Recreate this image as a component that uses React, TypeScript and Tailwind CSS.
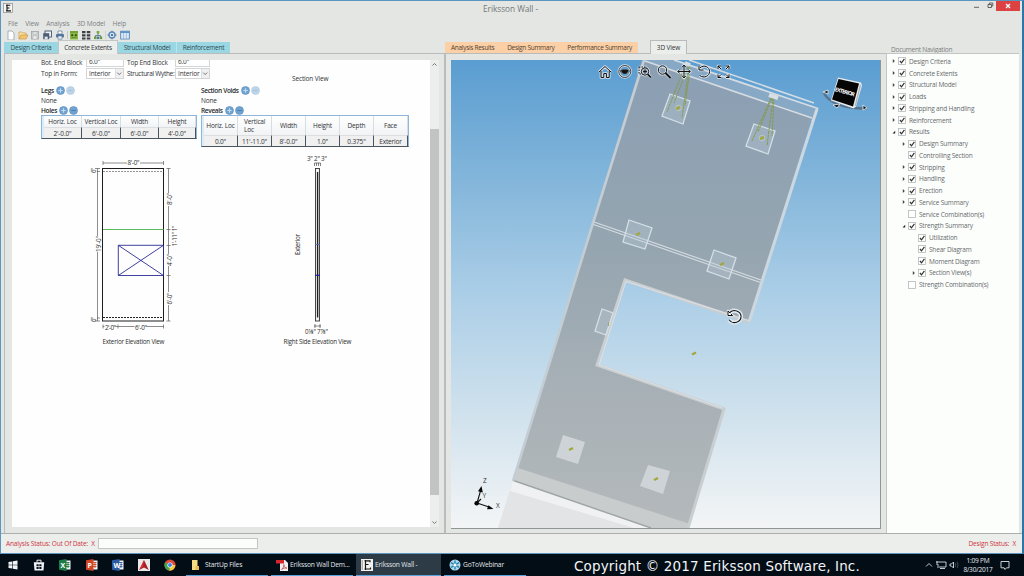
import React from "react";

/* ---------- small shared pieces ---------- */

const tools = [
  <path key="a" d="M2 1h4l2 2v7H2z" fill="#fff" stroke="#8795a8" strokeWidth=".7" />,
  <g key="b"><path d="M1 9V2h3l1 1h3v2" fill="#fbe3a4" stroke="#c99a4d" strokeWidth=".7" /><path d="M1 9l2-4h7L8 9z" fill="#f6c66b" stroke="#c08c3c" strokeWidth=".6" /></g>,
  <g key="c"><rect x="1.5" y="1.5" width="7" height="7.5" fill="#cfd1d3" stroke="#a3a6a9" strokeWidth=".8" /><path d="M3 2h4v2H3zM3 6h4v3H3z" fill="#eee" stroke="#a3a6a9" strokeWidth=".4" /></g>,
  <g key="d"><rect x="3" y="1" width="6.500" height="6" fill="#eef2f6" stroke="#44566c" strokeWidth=".9" /><rect x="1.200" y="3.200" width="6" height="6" fill="#4c5d74" /><path d="M2.700 6.600h3v2.600h-3z" fill="#dfe6ee" /></g>,
  <g key="e"><path d="M3 1h4v3H3z" fill="#fff" stroke="#55708f" strokeWidth=".7" /><rect x="1" y="4" width="8" height="3.400" rx="1" fill="#56779d" /><path d="M3 6h4v3.200H3z" fill="#e9f1fa" stroke="#55708f" strokeWidth=".6" /></g>,
];

const tools2 = [
  <g key="f"><rect x="1" y="1" width="8" height="8.500" fill="#8cba45" /><path d="M1 2h8" stroke="#5f8a2c" strokeWidth="1" /><path d="M2.500 4.500h1.500v1.500H2.500zM6 4.500h1.500v1.500H6zM2.500 7.700h5" fill="#2d4d12" stroke="#34551a" strokeWidth=".5" /></g>,
  <path key="g" d="M1 1h3.500v2.200H1zM5.800 1h3.500v2.200H5.800zM1 4.200h3.500v2.200H1zM5.800 4.200h3.500v2.200H5.800zM1 7.400h3.500v2.200H1zM5.800 7.400h3.500v2.200H5.800z" fill="#3b3f45" />,
  <g key="h"><path d="M5 3v2.500M2.500 8V5.500h5V8" fill="none" stroke="#4d6c85" strokeWidth=".8" /><rect x="3.700" y="1" width="2.600" height="2.700" fill="#79a83c" /><rect x="1" y="6.500" width="2.600" height="2.600" fill="#6a9c3a" /><rect x="3.900" y="6.500" width="2.300" height="2.600" fill="#4c7cae" /><rect x="6.600" y="6.500" width="2.600" height="2.600" fill="#6a9c3a" /></g>,
];

const tools3 = [
  <g key="i"><circle cx="5" cy="5" r="3" fill="#d7e6f4" stroke="#5f8ab4" strokeWidth="1.400" /><path d="M5 .8v1.500M5 7.700v1.500M.6 5h1.600M7.800 5h1.600" stroke="#5f8ab4" strokeWidth="1.400" /><circle cx="5" cy="5" r="1.100" fill="#375f8b" /></g>,
  <g key="j"><rect x=".7" y="1.200" width="8.600" height="7.800" fill="#fff" stroke="#3f77b0" strokeWidth=".8" /><path d="M.7 1.200h8.600v2H.7z" fill="#5a93c9" /><path d="M.7 5h8.600M.7 7h8.600M3.500 3v6M6.400 3v6" stroke="#6d9cc9" strokeWidth=".5" /></g>,
];

function ToolGroup({ items }: { items: React.ReactNode[] }) {
  return (
    <div className="flex gap-[2.300px]">
      {items.map((it, i) => (
        <svg key={i} viewBox="0 0 10 10" className="size-[10px]">{it}</svg>
      ))}
    </div>
  );
}

function RoundBtn({ minus, dim }: { minus?: boolean; dim?: boolean }) {
  return (
    <svg viewBox="0 0 9 9" className={dim ? "size-[9px] opacity-45" : "size-[9px]"}>
      <circle cx="4.500" cy="4.500" r="4" fill="#6fa3d2" stroke="#5f8db8" strokeWidth=".6" />
      <path d={minus ? "M2.300 4.500h4.400" : "M2.300 4.500h4.400M4.500 2.300v4.400"} stroke={minus ? "#4d7dab" : "#c2dbef"} strokeWidth="1.100" />
    </svg>
  );
}

function Heading({ label, dim }: { label: string; dim?: boolean }) {
  return (
    <div className="flex h-[10px] items-center gap-[1px]">
      <span className="pr-[1px] font-semibold tracking-[-0.320px] text-[#26292c]">{label}</span>
      <RoundBtn />
      <RoundBtn minus dim={dim} />
    </div>
  );
}

function Select({ value, className }: { value: string; className: string }) {
  return (
    <div className={`flex h-[11px] items-center justify-between border border-[#d3d5d7] bg-white pl-[2px] ${className}`}>
      <span>{value}</span>
      <svg viewBox="0 0 8 9" className="h-[9px] w-[8px] bg-[#efefef]">
        <path d="M.3 0v9" stroke="#c8cacc" strokeWidth=".6" />
        <path d="M2.200 3.600l2 2 2-2" fill="none" stroke="#555" strokeWidth=".8" />
      </svg>
    </div>
  );
}

function DataTable({ cols, head, row, headHeight }: { cols: string; head: string[]; row: string[]; headHeight: string }) {
  return (
    <div className="flex border border-[#8db6da] border-b-[#4a545e] bg-white">
      <div className="w-[2px] bg-[#d9ecf8]" />
      <div className="flex-1">
        <div className={`grid ${cols} ${headHeight}`}>
          {head.map((h) => (
            <div key={h} className="flex items-center justify-center border-r border-[#d6dde3] bg-gradient-to-b from-white to-[#f1f3f5] leading-[8px]">
              <span className={h === "Vertical Loc" && row.length > 4 ? "w-[21px]" : "whitespace-nowrap"}>{h}</span>
            </div>
          ))}
        </div>
        <div className={`grid h-[11px] ${cols}`}>
          {row.map((v, i) => (
            <div key={i} className="flex items-center justify-center border-r border-r-[#4a545e] border-t border-t-[#dcdfe1] bg-[#f0f0f0]">{v}</div>
          ))}
        </div>
      </div>
    </div>
  );
}

/* ---------- elevation drawings ---------- */

function Elevations() {
  return (
    <svg viewBox="12 149 418 200" className="block h-[200px] w-[418px] tracking-normal" fontSize="6.300" fill="#303030">
      <g stroke="#5b5b5b" strokeWidth=".7" fill="none">
        <path d="M103 163h60.500M103 161v4M163.500 161v4M97.500 168.500v152.500M95 168.500h5M95 321h5M100 171.500h-3M100 318h-3" />
        <path d="M168.500 168.500v152.500M166.500 168.500h4M166.500 229.500h4M166.500 245.500h4M166.500 275.500h4M166.500 321h4M103 326.500h60.500M103 324.500v4M118 324.500v4M163.500 324.500v4" />
      </g>
      <rect x="102.500" y="168.500" width="61" height="152.500" fill="none" stroke="#1e1e1e" strokeWidth="1" />
      <path d="M103 171.500h60" stroke="#777" strokeWidth=".8" strokeDasharray="2 1" />
      <path d="M103 317.500h60" stroke="#222" strokeWidth="1" strokeDasharray="2 1" />
      <path d="M103 229.500h60.500" stroke="#5cba5c" strokeWidth="1.200" />
      <path d="M118.300 245.300h45.200v30.200h-45.200zM118.300 245.300l45.200 30.200M163.500 245.300l-45.200 30.200" fill="none" stroke="#2b2b94" strokeWidth=".9" />
      <g fill="#fdfefd">
        <rect x="127" y="160" width="13" height="6" /><rect x="95" y="236" width="5" height="16" /><rect x="166" y="193" width="5" height="13" />
        <rect x="166" y="254" width="5" height="12" /><rect x="166" y="292" width="5" height="13" /><rect x="104.500" y="324" width="11" height="6" /><rect x="134.500" y="324" width="12" height="6" />
      </g>
      <text x="127.500" y="165.300" textLength="12">8'-0"</text>
      <text x="105" y="329.500" textLength="11">2'-0"</text>
      <text x="135" y="329.500" textLength="12">6'-0"</text>
      <text transform="translate(101 252) rotate(-90)" textLength="16">19'-0"</text>
      <text transform="translate(95.500 173) rotate(-90)" textLength="5">6"</text>
      <text transform="translate(95.500 322) rotate(-90)" textLength="5">6"</text>
      <text transform="translate(171.500 205) rotate(-90)" textLength="12">8'-0"</text>
      <text transform="translate(177.300 246.500) rotate(-90)" textLength="21">1'-11" 1"</text>
      <text transform="translate(171.500 266) rotate(-90)" textLength="12">4'-0"</text>
      <text transform="translate(171.500 304.500) rotate(-90)" textLength="12">6'-0"</text>
      <text x="102.500" y="343.500" textLength="62">Exterior Elevation View</text>

      <text x="307" y="161" textLength="20">3" 2" 3"</text>
      <path d="M314.500 166v-3h6v3M316.500 163v3M318.500 163v3M315 324v4M320 324v4M314 326h7" fill="none" stroke="#333" strokeWidth=".6" />
      <rect x="315.500" y="168.500" width="4" height="152.500" fill="#f3f3f3" stroke="#333" strokeWidth=".9" />
      <path d="M317.600 172v145.500" stroke="#222" strokeWidth="1.400" />
      <path d="M315 244.500h5" stroke="#555fb0" strokeWidth=".8" />
      <path d="M315 275.300h5" stroke="#1c1cae" strokeWidth="1.200" />
      <text transform="translate(300 255) rotate(-90)" textLength="21">Exterior</text>
      <text x="305" y="334" textLength="23">0⅛" 7⅞"</text>
      <text x="283.500" y="343.500" textLength="68">Right Side Elevation View</text>
    </svg>
  );
}

/* ---------- 3D viewport ---------- */

const plates = [
  "670,94 690,101 683,124 662,116",
  "754,124 775,131 768,154 746,146",
  "629,220 652,228 645,249 623,242",
  "714,250 736,258 729,279 707,271",
  "602,309 613,313 606,335 595,331",
];
const dots = [[678, 108], [762, 138], [638, 234], [722, 264], [694, 353.500], [571, 449], [656, 479]];

function Viewport() {
  return (
    <svg viewBox="451 60 429 468" className="block h-full w-full tracking-normal">
      <defs>
        <linearGradient id="sky" x1="0" y1="0" x2="0" y2="1">
          <stop offset="0" stopColor="#5a9dd1" />
          <stop offset=".25" stopColor="#82b5da" />
          <stop offset=".5" stopColor="#abcee7" />
          <stop offset=".75" stopColor="#cfe1ed" />
          <stop offset="1" stopColor="#f3f5f6" />
        </linearGradient>
        <linearGradient id="slab" x1="0" y1="0" x2="0" y2="1">
          <stop offset="0" stopColor="#8b9fb4" />
          <stop offset=".4" stopColor="#95a5b0" />
          <stop offset=".7" stopColor="#a7b0b6" />
          <stop offset="1" stopColor="#b4b9bb" />
        </linearGradient>
      </defs>
      <rect x="451" y="60" width="429" height="468" fill="url(#sky)" />
      <path d="M642 60H674L818 108 812 119z" fill="#87a9c6" />
      <path d="M642 60L812 117 749 322 625 280 597 365 724 409 689 528H651L513 481z" fill="url(#slab)" />
      <path d="M513 480L651 528H498z" fill="#e2e4e5" />
      <path d="M513 480L651 528H634L510 491z" fill="#eff1f2" />
      <path d="M518 468L690 524 689 528H651L513 480z" fill="#c8cccd" />
      <path d="M513.500 480.500L651 528" stroke="#9fa4a6" strokeWidth="1.400" />
      <g fill="none" stroke="#d5dce2">
        <path d="M644 60L593 223 513 481" stroke="#c4cdd4" strokeWidth="2.600" />
        <path d="M817 109L749 322" stroke="#ccd7df" strokeWidth="3" />
        <path d="M674 60L818 108.500" strokeWidth="1.800" />
        <path d="M645 61L812 118M689 60L814 103" strokeWidth="1.500" />
        <path d="M818 108L812 121" strokeWidth="1.200" />
        <path d="M594 222L761 280M593.500 224.500L760.500 282.500" strokeWidth="1.100" />
        <path d="M749 322L625 280 597 365 724 409 688 528" stroke="#c9ced1" strokeWidth="3" />
        <path d="M749 320.500L626 281.500 599 365 722 408" stroke="#e2e5e7" strokeWidth=".8" />
      </g>
      {plates.map((p) => (
        <polygon key={p} points={p} fill="#b9cbd8" fillOpacity=".35" stroke="#d4dfe6" strokeWidth="1.300" />
      ))}
      <polygon points="563,435 585,442 578,464 556,457" fill="#ced3d7" />
      <polygon points="648,465 670,471 663,494 640,486" fill="#ced3d7" />
      <path d="M685 66l-18 46M689 66l-7 52M688 67l-14 36M690 68l-5 38M771 98l-19 43M773 98l-6 48M772 98l-14 34M774 98l-2 38" stroke="#84993f" strokeWidth=".9" fill="none" strokeDasharray="3 .7" />
      <path d="M685 63l5 2M769 95l9 3" stroke="#d7dfe4" strokeWidth="4" />
      <circle cx="678.500" cy="108" r="2.800" fill="none" stroke="#b9c9b9" />
      <circle cx="762" cy="138" r="2.800" fill="none" stroke="#b9c9b9" />
      {dots.map(([x, y]) => (
        <path key={`${x}-${y}`} d={`M${x - 2} ${y + 1}L${x + 2} ${y - 1}`} stroke="#a2a838" strokeWidth="2.200" />
      ))}
      <path d="M608.500 322v4" stroke="#a2a868" />

      {/* navigation tools, pale halo below a dark stroke */}
      {["#dce6ee", "#111"].map((c, i) => (
        <g key={c} fill="none" stroke={c} strokeWidth={i ? 1 : 2.600} strokeLinejoin="round">
          <path d="M599 72l6-5.500 6 5.500M601 71v6.500h2.800v-4h2.600v4h2.800V71" />
          <circle cx="624.800" cy="71.500" r="6" strokeWidth={i ? 0.800 : 2.400} />
          <path d="M620 70.800c2.500-1.800 7-1.800 9.600 0c-1.200 3.800-8.400 3.800-9.600 0z" strokeWidth={i ? 0.600 : 1} />
          <path d="M639 67h8M639 67v7h3" strokeDasharray={i ? "1.500 1" : undefined} />
          <circle cx="645" cy="71.500" r="3.700" />
          <path d="M643 71.500h4M645 69.500v4" strokeWidth={i ? 0.900 : 0} />
          <path d="M647.800 74.300l3 3" strokeWidth={i ? 1.700 : 3} />
          <circle cx="662.500" cy="70" r="4.200" />
          <path d="M665.500 73l5 5" strokeWidth={i ? 2 : 3.200} />
          <path d="M684 65.500v12M678 71.500h12M682.300 67l1.700-2 1.700 2M682.300 76l1.700 2 1.700-2M679.600 69.800l-2 1.700 2 1.700M688.400 69.800l2 1.700-2 1.700" />
          <path d="M700 67.800c4-3.600 9.600-.8 9.600 3.700s-5.600 7.400-10 3.900M699 65.500v4.500h4.500" />
          <path d="M718 69v-3h3M718 66l3 3M729 69v-3h-3M729 66l-3 3M718 74.500v3h3M718 77.500l3-3M729 74.500v3h-3M729 77.500l-3-3" />
          <path d="M729 313.300c4-5 12-2.300 12 3.200s-8 8.700-12 3.200" strokeWidth={i ? 1.100 : 4.200} />
          <path d="M728 311v4.500h4.500z" fill={i ? "#fff" : "none"} />
        </g>
      ))}
      <path d="M729.800 314c3.600-4.200 10-1.700 10 2.500s-6.400 7-10 2.500" fill="none" stroke="#e8edf1" strokeWidth="1" />
      <path d="M621.800 70.300h6c.3 4-6.300 4-6 0z" fill="#111" stroke="#111" />

      {/* orientation cube */}
      <path d="M824 93c4 9 22 17 43 15" fill="none" stroke="#59758e" strokeWidth="2.600" />
      <path d="M823 92l5-2v4zM867 108l-4-3v5zM833 105l7-1-3 4z" fill="#111" stroke="#dde6ed" strokeWidth=".9" />
      <path d="M838 77.500l23 5 1 3-6 21-2.500 2-22.500-8z" fill="#e8edf1" />
      <path d="M838.500 79l20.500 4.500-6 23-21-7z" fill="#050505" />
      <path d="M860 84l1 1.500-5 20-1.500 1z" fill="#a8b2ba" />
      <text transform="translate(834.500 91) rotate(15)" fontSize="5.400" fontWeight="700" fill="#fff" textLength="20.500">EXTERIOR</text>

      {/* axis triad */}
      <path d="M477 503l3.500-12M477 503l12 4M477 503l4-4" stroke="#111" strokeWidth="1.100" />
      <circle cx="476.700" cy="503.300" r="2.300" fill="#080808" />
      <path d="M481.500 486l1.300 6.500-4.800-1.200zM493.500 509l-6.500.3 1.500-4z" fill="#080808" />
      <g fontSize="6.500" fill="#333"><text x="483" y="482.500">Z</text><text x="482.500" y="498">Y</text><text x="496" y="508">X</text></g>
    </svg>
  );
}

/* ---------- document navigation ---------- */

type Node = [depth: number, arrow: "c" | "o" | "", checked: boolean, label: string];
const nodes: Node[] = [
  [0, "c", true, "Design Criteria"], [0, "c", true, "Concrete Extents"], [0, "c", true, "Structural Model"],
  [0, "c", true, "Loads"], [0, "c", true, "Stripping and Handling"], [0, "c", true, "Reinforcement"],
  [0, "o", true, "Results"], [1, "c", true, "Design Summary"], [1, "", true, "Controlling Section"],
  [1, "c", true, "Stripping"], [1, "c", true, "Handling"], [1, "c", true, "Erection"],
  [1, "c", true, "Service Summary"], [1, "", false, "Service Combination(s)"], [1, "o", true, "Strength Summary"],
  [2, "", true, "Utilization"], [2, "", true, "Shear Diagram"], [2, "", true, "Moment Diagram"],
  [2, "c", true, "Section View(s)"], [1, "", false, "Strength Combination(s)"],
];
const indent = ["pl-[3.500px]", "pl-[13.500px]", "pl-[23.500px]"];

function NavTree() {
  return (
    <div className="flex-1 border-l border-t border-[#c3c6c6] bg-[#fcfefc] pt-[1.500px] tracking-[-0.190px] text-[#686b6d]">
      {nodes.map(([d, arrow, on, label]) => (
        <div key={label} className={`flex h-[11.750px] items-center ${indent[d]}`}>
          <svg viewBox="0 0 7 8" className="h-[8px] w-[7px]">
            {arrow === "c" && <path d="M1.800 2.100l2 1.900-2 1.900z" fill="#444" />}
            {arrow === "o" && <path d="M4.200 2.800v2.700H1.500z" fill="#222" />}
          </svg>
          <svg viewBox="0 0 8 8" className="size-[8px]">
            <rect x=".5" y=".5" width="7" height="7" fill="#fff" stroke="#b5b8ba" strokeWidth=".8" />
            {on && <path d="M1.900 4l1.600 1.800 2.900-4" fill="none" stroke="#333" strokeWidth="1.200" />}
          </svg>
          <span className="ml-[3.500px] whitespace-nowrap">{label}</span>
        </div>
      ))}
    </div>
  );
}

/* ---------- taskbar ---------- */

function Office({ letter, color }: { letter: string; color: string }) {
  return (
    <svg viewBox="0 0 12 12" className="size-[12px]">
      <rect x="5" y="1.500" width="6.500" height="9" fill="#f3f6f6" />
      <path d="M7 3.500h3.500M7 5.500h3.500M7 7.500h3.500M9 3v6" stroke={color} strokeWidth=".9" />
      <path d="M0 1.200L7.500 0v12L0 10.800z" fill={color} />
      <text x="1.500" y="8.600" fontSize="7" fontWeight="700" fill="#fff">{letter}</text>
    </svg>
  );
}

function Task({ icon, label, active }: { icon: React.ReactNode; label: string; active?: boolean }) {
  return (
    <div className={`flex h-[22px] items-center border-b-[1.500px] border-[#5ba3dc] pl-[5px] ${active ? "w-[85px] bg-[#2c3b45]" : "w-[82px]"}`}>
      <svg viewBox="0 0 12 12" className="size-[12px]">{icon}</svg>
      <span className="ml-[2px] whitespace-nowrap text-[6.700px] tracking-[-0.170px] text-[#e3e8eb]">{label}</span>
    </div>
  );
}

function Taskbar() {
  return (
    <div className="flex h-[22px] items-center bg-[#030d16]">
      <div className="flex w-[186px] items-center gap-[14.200px] pl-[7px]">
        <svg viewBox="0 0 12 12" className="size-[12px]"><path d="M1.500 3l3.700-.6v3.300H1.500zM5.800 2.300l4.700-.7v4.100H5.800zM1.500 6.300h3.700v3.300l-3.700-.6zM5.800 6.300h4.700v4.100l-4.700-.7z" fill="#f1f4f6" /></svg>
        <svg viewBox="0 0 12 12" className="size-[12px]"><path d="M4 3.500V1.200h4v2.300" fill="none" stroke="#f1f4f6" /><path d="M.8 3.300h10.400l-.7 8.200h-9z" fill="#f1f4f6" /><path d="M3.500 5.300h2.200v2H3.500zM6.300 5.300h2.200v2H6.300zM3.500 8h2.200v2H3.500zM6.300 8h2.200v2H6.300z" fill="#0a141c" /></svg>
        <Office letter="X" color="#1f7b46" />
        <Office letter="P" color="#d04526" />
        <Office letter="W" color="#2a5ba2" />
        <svg viewBox="0 0 12 12" className="size-[12px]"><rect width="12" height="12" fill="#e9e9ea" /><path d="M6 1l4.800 10L6 8.500 1.200 11z" fill="#a81e26" /><path d="M6 1l-1 6.500L1.200 11z" fill="#d8323a" /></svg>
        <svg viewBox="0 0 12 12" className="size-[12px]"><circle cx="6" cy="6" r="5.600" fill="#e04a3c" /><path d="M6 6L1.200 3.200A5.600 5.600 0 0 0 5.600 11.600z" fill="#3fa455" /><path d="M6 6h5.400A5.600 5.600 0 0 1 5.300 11.600z" fill="#f5cb3c" /><circle cx="6" cy="6" r="2.600" fill="#fff" /><circle cx="6" cy="6" r="2" fill="#4484e0" /></svg>
      </div>
      <div className="flex w-[388px] items-center gap-[3px]">
        <Task label="StartUp Files" icon={<g><path d="M1 1h5.500v10H1z" fill="#f6dc85" /><path d="M4.500 7h3.500v4H4.500z" fill="#e9bf55" /></g>} />
        <Task label="Eriksson Wall Dem..." icon={<g><path d="M4 1h5l3 3v8H4z" fill="#f3eeee" /><path d="M0 1h8v3.500H0z" fill="#d8262c" /><path d="M5.500 10.500c2-2 2.500-3 2.300-5c.5 3 1.500 3.500 3.200 3.600c-2-.3-3.500 0-5.500 1.400" fill="none" stroke="#b53a3a" strokeWidth=".7" /></g>} />
        <Task active label="Eriksson Wall -" icon={<g><rect width="12" height="12" fill="#f1f1ef" /><path d="M1.200 1v10" stroke="#555" strokeWidth=".6" /><path d="M4.500 1v10M3.500 1.800h5.500M9 1.300v2M3.500 10h6M9.500 8.500v2M5 5.500h2.500" stroke="#151515" strokeWidth="1.200" /></g>} />
        <Task label="GoToWebinar" icon={<g><circle cx="6" cy="6" r="5.500" fill="#a9d9ee" /><path d="M6 1.500v9M2 3.700l8 4.600M10 3.700L2 8.300" stroke="#2b80ab" strokeWidth="1.400" /><circle cx="6" cy="6" r="1.600" fill="#fff" /></g>} />
      </div>
      <div className="w-[350px] whitespace-nowrap pt-[1px] font-['DejaVu_Sans'] text-[13.500px] leading-[20px] tracking-[0.150px] text-[#f2f4f5]">Copyright © 2017 Eriksson Software, Inc.</div>
      <svg viewBox="0 0 36 12" className="h-[12px] w-[36px]" fill="none" stroke="#d6dde2" strokeWidth=".9">
        <path d="M2 7.500l3-3 3 3" />
        <path d="M15 3h7v5h-7M13 2v4M12 3h3M16 9.500h5M14 5v4" />
        <path d="M26 5h1.500l2-2v6l-2-2H26z" /><path d="M31 4c1 1.500 1 2.500 0 4M33 3c1.300 2 1.300 4 0 6" opacity=".35" />
      </svg>
      <div className="flex w-[35px] flex-col items-center pl-[1px] text-[6.600px] leading-[9.500px] tracking-[-0.220px] text-[#e6eaed]">
        <span>1:09 PM</span>
        <span>8/30/2017</span>
      </div>
      <svg viewBox="0 0 10 11" className="ml-[5px] h-[11px] w-[10px]"><path d="M1 1.500h8v6.300H6.500L5 9.500 4.200 7.800H1z" fill="none" stroke="#dfe5e9" strokeWidth=".9" /></svg>
    </div>
  );
}

/* ---------- application ---------- */

export default function App() {
  return (
    <div className="flex h-[576px] w-[1024px] flex-col overflow-hidden bg-[#e4e6e4] font-['Open_Sans','Noto_Sans',sans-serif] text-[6.500px] leading-[9px] tracking-[-0.150px] text-[#303336]">
      <div className="flex h-[554px] flex-col border border-[#5b94bf] border-r-2 border-r-[#2f76a8]">
        {/* title */}
        <div className="flex h-[16px] shrink-0 items-start">
          <svg viewBox="0 0 10 10" className="ml-[2px] mt-[2px] size-[10px]"><rect x=".5" y=".5" width="9" height="9" fill="#f4f4f2" stroke="#8a8a8a" strokeWidth=".7" /><path d="M4 1.500v7M3 2.200h4.300M3 7.900h5M4 5h2.500" stroke="#151515" strokeWidth="1.100" /></svg>
          <div className="flex-1 pl-[470px] pt-[3px] text-[8.300px] tracking-[-0.050px] text-[#74787a]">Eriksson Wall -</div>
          <svg viewBox="0 0 22 12" className="h-[12px] w-[22px]"><path d="M0 6.300h5" stroke="#666" strokeWidth="1" /><path d="M14 3.500h3.500v3H14zM15.300 3.500v-1.500h3.500v3h-1.300" fill="none" stroke="#555" strokeWidth=".9" /></svg>
          <div className="mr-[2px] flex h-[10px] w-[24px] items-center justify-center bg-[#dd4242]">
            <svg viewBox="0 0 6 6" className="size-[6px]"><path d="M1 1l4 4M5 1L1 5" stroke="#fff" strokeWidth="1.300" /></svg>
          </div>
        </div>
        {/* menu */}
        <div className="flex h-[12px] shrink-0 items-center gap-[7.500px] pl-[7px] text-[#7d8082]">
          <span>File</span><span>View</span><span>Analysis</span><span>3D Model</span><span>Help</span>
        </div>
        {/* toolbar */}
        <div className="flex h-[11px] shrink-0 items-center pl-[4.500px]">
          <ToolGroup items={tools} />
          <div className="ml-[2px] mr-[1px] h-[8px] w-px bg-[#c4c6c6]" />
          <ToolGroup items={tools2} />
          <div className="ml-[2px] mr-[1px] h-[8px] w-px bg-[#d0d2d2]" />
          <ToolGroup items={tools3} />
        </div>

        {/* workspace */}
        <div className="flex h-[494px] shrink-0 border-b border-[#abaeae]">
          {/* left pane */}
          <div className="ml-[3px] flex w-[441px] flex-col">
            <div className="flex h-[13px] shrink-0 items-end whitespace-nowrap tracking-[-0.240px] text-[#2d4b55]">
              <div className="flex h-[11px] w-[54px] items-center justify-center bg-[#9bd7e2]">Design Criteria</div>
              <div className="z-10 -mb-px flex h-[14px] w-[60px] items-center justify-center border border-b-0 border-[#c3c6c6] bg-[#eceeec] text-[#303336]">Concrete Extents</div>
              <div className="flex h-[11px] w-[59px] items-center justify-center border-r border-[#bfe3ea] bg-[#9bd7e2]">Structural Model</div>
              <div className="flex h-[11px] w-[53px] items-center justify-center bg-[#9bd7e2]">Reinforcement</div>
            </div>
            <div className="flex flex-1 border-x border-t border-[#b9bcbc] pb-[6px] pl-[7px] pt-[6px]">
              <div className="h-[467px] w-[418px] overflow-hidden bg-[#fdfefd]">
                <div className="-mt-[4px] flex h-[24px]">
                  <div className="grid w-[198px] shrink-0 grid-cols-[45px_41px_48px_35px] content-start pl-[29px]">
                    <span className="h-[12px] whitespace-nowrap pt-[1.500px]">Bot. End Block</span>
                    <div className="h-[11px] w-[38px] border border-[#d3d5d7] pl-[2px]">6.0"</div>
                    <span className="whitespace-nowrap pt-[1.500px]">Top End Block</span>
                    <div className="h-[11px] w-[35px] border border-[#d3d5d7] pl-[2px]">6.0"</div>
                    <span className="whitespace-nowrap pt-[1px]">Top in Form:</span>
                    <Select value="Interior" className="w-[38px]" />
                    <span className="whitespace-nowrap pt-[1px] tracking-[-0.300px]">Structural Wythe:</span>
                    <Select value="Interior" className="w-[35px]" />
                  </div>
                  <div className="pl-[82px] pt-[18px]">Section View</div>
                </div>
                <div className="flex h-[69px] items-start gap-[4px] pl-[29px] pt-[5px]">
                  <div className="w-[156px]">
                    <Heading label="Legs" dim />
                    <div className="h-[10px] pt-[1px]">None</div>
                    <Heading label="Holes" />
                    <DataTable cols="grid-cols-[38px_39px_38px_37px]" headHeight="h-[11px]" head={["Horiz. Loc", "Vertical Loc", "Width", "Height"]} row={["2'-0.0\"", "6'-0.0\"", "6'-0.0\"", "4'-0.0\""]} />
                  </div>
                  <div className="w-[208px]">
                    <Heading label="Section Voids" dim />
                    <div className="h-[10px] pt-[1px]">None</div>
                    <Heading label="Reveals" />
                    <DataTable cols="grid-cols-[34px_34px_34px_34px_34px_34px]" headHeight="h-[19px]" head={["Horiz. Loc", "Vertical Loc", "Width", "Height", "Depth", "Face"]} row={["0.0\"", "11'-11.0\"", "8'-0.0\"", "1.0\"", "0.375\"", "Exterior"]} />
                  </div>
                </div>
                <Elevations />
              </div>
              <div className="flex w-[9px] flex-col items-center bg-[#eceeed]">
                <svg viewBox="0 0 9 9" className="size-[9px]"><path d="M2.500 5.500l2-2 2 2" fill="none" stroke="#777" /></svg>
                <div className="mt-[60px] h-[366px] w-[9px] bg-[#c2c4c4]" />
                <svg viewBox="0 0 9 9" className="mt-auto size-[9px]"><path d="M2.500 3.500l2 2 2-2" fill="none" stroke="#777" /></svg>
              </div>
            </div>
          </div>
          {/* centre pane */}
          <div className="flex w-[441px] flex-col">
            <div className="flex h-[13px] shrink-0 items-end whitespace-nowrap">
              <div className="flex h-[11px] w-[193px] items-center justify-between bg-[#fbd0a6] pl-[6px] pr-[6px] tracking-[-0.290px] text-[#54422f]">
                <span>Analysis Results</span><span>Design Summary</span><span>Performance Summary</span>
              </div>
              <div className="z-10 -mb-px ml-[12px] flex h-[14px] w-[37px] items-center justify-center border border-b-0 border-[#b9bcbc] bg-[#eceeec]">3D View</div>
            </div>
            <div className="flex-1 border-l border-t border-[#b9bcbc] pl-[5px] pt-[6px]">
              <div className="h-[469px] w-[430px] border-b border-r border-[#8f9698]"><Viewport /></div>
            </div>
          </div>
          {/* navigation */}
          <div className="flex w-[133px] flex-col">
            <div className="h-[13px] shrink-0 pl-[5px] pt-[4.500px] tracking-[-0.240px] text-[#7b7e80]">Document Navigation</div>
            <NavTree />
          </div>
        </div>

        {/* status */}
        <div className="flex flex-1 items-center bg-[#eceeec] pl-[5px] pr-[6px] text-[#cc3540]">
          <span className="w-[92px] whitespace-nowrap">Analysis Status: Out Of Date:&nbsp; X</span>
          <div className="h-[11px] w-[160px] border border-[#c3c5c6] bg-[#fcfefc]" />
          <span className="ml-auto whitespace-nowrap">Design Status:&nbsp; X</span>
        </div>
      </div>
      <Taskbar />
    </div>
  );
}
